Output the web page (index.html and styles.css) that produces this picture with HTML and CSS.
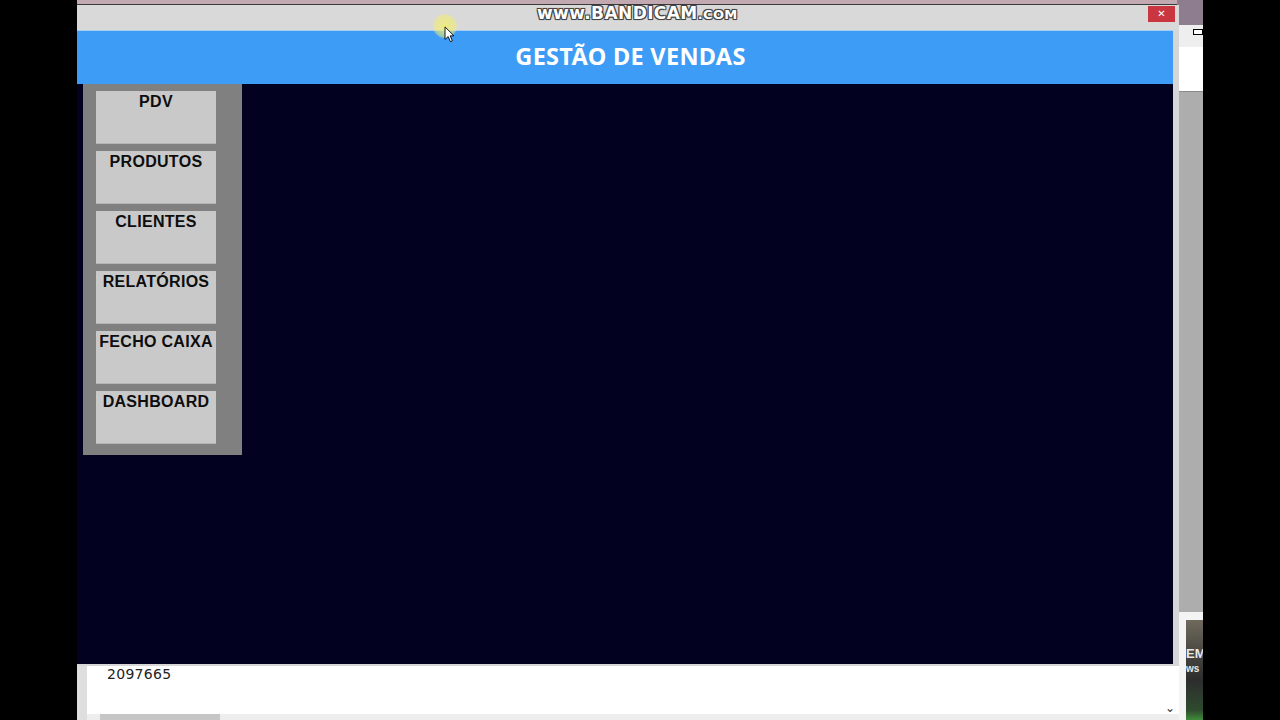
FILE: index.html
```html
<!doctype html>
<html>
    <head>
        <meta charset="UTF-8" />
        <title>Gestão de Vendas</title>
        <link rel="stylesheet" href="styles.css">
    </head>
    <body>
        <div class="letterbox"></div>

        <div class="screen">
            <!-- desktop strip behind everything -->
            <div class="desk-strip"></div>

            <!-- window behind, on the right -->
            <div class="back-window">
                <div class="back-title"></div>
                <div class="back-toolbar"><span class="back-icon"></span></div>
                <div class="back-body"></div>
                <div class="back-bottom">
                    <div class="thumb">
                        <span class="thumb-big">EM</span>
                        <span class="thumb-small">ws</span>
                    </div>
                </div>
            </div>

            <!-- console window behind, at the bottom -->
            <div class="console">
                <div class="console-text">2097665</div>
                <div class="console-arrow">&#x2304;</div>
                <div class="console-scroll"><div class="console-thumb"></div></div>
            </div>

            <!-- app window -->
            <div class="app">
                <div class="titlebar">
                    <div class="close-btn">&#x2715;</div>
                </div>
                <div class="app-inner">
                    <div class="header">
                        <h1>GESTÃO DE VENDAS</h1>
                    </div>
                    <div class="main">
                        <div class="sidebar">
                            <div class="menu-btn">PDV</div>
                            <div class="menu-btn">PRODUTOS</div>
                            <div class="menu-btn">CLIENTES</div>
                            <div class="menu-btn">RELATÓRIOS</div>
                            <div class="menu-btn">FECHO CAIXA</div>
                            <div class="menu-btn">DASHBOARD</div>
                        </div>
                    </div>
                </div>
            </div>

            <div class="watermark">www.BANDICAM<span class="wm-small">.com</span></div>

            <!-- mouse pointer -->
            <div class="cursor">
                <div class="cursor-glow"></div>
                <svg class="cursor-arrow" viewBox="0 0 12 19" xmlns="http://www.w3.org/2000/svg">
                    <path d="M1 1 L1 15 L4.5 11.8 L7 17.5 L9.2 16.6 L6.8 11 L11 11 Z" fill="white" stroke="black" stroke-width="1" stroke-linejoin="round" />
                </svg>
            </div>
        </div>

        <div class="letterbox"></div>
    </body>
</html>
```

FILE: styles.css
```css
html,
body {
    margin: 0;
    padding: 0;
}

body {
    display: flex;
    width: 1280px;
    height: 720px;
    overflow: hidden;
    background-color: #000000;
    font-family: "Noto Sans", "Open Sans", sans-serif;
}

.letterbox {
    width: 77px;
    flex-shrink: 0;
    background-color: #000000;
}

.screen {
    position: relative;
    width: 1126px;
    height: 720px;
    flex-shrink: 0;
    background-color: #adadad;
    overflow: hidden;
}

.desk-strip {
    position: absolute;
    top: 0;
    left: 0;
    right: 0;
    height: 4px;
    background-color: #c2a9b1;
    border-bottom: 1px solid #3a3a3a;
}

/* Background window on the right */
.back-window {
    position: absolute;
    top: 0;
    left: 1100px;
    width: 26px;
    height: 720px;
    display: flex;
    flex-direction: column;
}

.back-title {
    height: 25px;
    background-color: #8d7d8f;
}

.back-toolbar {
    height: 22px;
    background-color: #eeeeee;
    border-left: 2px solid #d6d6d6;
    padding: 4px 0 0 14px;
    box-sizing: border-box;
}

.back-icon {
    display: block;
    width: 8px;
    height: 4px;
    border: 1px solid #000000;
    background-color: #ffffff;
}

.back-body {
    flex: 1;
    background-color: #adadad;
    border-top: 44px solid #ffffff;
    border-left: 2px solid #d6d6d6;
    box-shadow: inset 0 1px 0 #8a8a8a;
}

.back-bottom {
    height: 108px;
    background-color: #f4f4f4;
    border-left: 2px solid #d6d6d6;
    padding: 8px 0 0 7px;
    box-sizing: border-box;
}

.thumb {
    height: 100px;
    background: linear-gradient(#6f6a5c 0%, #4c4a44 30%, #2d2d2d 60%, #2f4a2e 90%, #3f8c3a 100%);
    display: flex;
    flex-direction: column;
    padding-top: 27px;
    box-sizing: border-box;
    color: #e8e8e8;
    font-family: "Liberation Sans", sans-serif;
    font-weight: bold;
    line-height: 1;
}

.thumb-big {
    font-size: 13px;
}

.thumb-small {
    font-size: 10px;
    margin-top: 4px;
}

/* Console behind, at the bottom */
.console {
    position: absolute;
    left: 0;
    top: 664px;
    width: 1102px;
    height: 56px;
    background-color: #ffffff;
    border-left: 10px solid #dedede;
    box-sizing: border-box;
}

.console-text {
    margin: 2px 0 0 20px;
    font-family: "DejaVu Sans", sans-serif;
    font-size: 14px;
    line-height: 16px;
    color: #222222;
    letter-spacing: 0.3px;
}

.console-arrow {
    position: absolute;
    right: 4px;
    bottom: 4px;
    font-size: 12px;
    color: #333333;
}

.console-scroll {
    position: absolute;
    left: 0;
    right: 0;
    bottom: 0;
    height: 6px;
    background-color: #eeeeee;
}

.console-thumb {
    margin-left: 13px;
    width: 120px;
    height: 6px;
    background-color: #c6c6c6;
}

/* App window */
.app {
    position: absolute;
    top: 5px;
    left: 0;
    width: 1102px;
    height: 661px;
    display: flex;
    flex-direction: column;
    background-color: #d6d6d6;
}

.titlebar {
    height: 25px;
    flex-shrink: 0;
    background-color: #d9d9d9;
    display: flex;
    justify-content: flex-end;
    padding: 1px 4px 0 0;
    box-sizing: border-box;
}

.close-btn {
    width: 27px;
    height: 16px;
    background-color: #c9363f;
    color: #ffffff;
    font-family: "DejaVu Sans", sans-serif;
    font-size: 10px;
    line-height: 16px;
    text-align: center;
}

.app-inner {
    flex: 1;
    display: flex;
    flex-direction: column;
    margin: 0 6px 2px 0;
    background-color: #020220;
}

.header {
    height: 54px;
    flex-shrink: 0;
    background-color: #3d9cf5;
    display: flex;
    align-items: center;
    justify-content: center;
    padding: 0 0 4px 11px;
    border-top: 1px solid #a7cdf1;
    box-sizing: border-box;
}

.header h1 {
    margin: 0;
    color: #ffffff;
    font-family: "Noto Sans", sans-serif;
    font-size: 23.5px;
    font-weight: 700;
    letter-spacing: 0.3px;
}

.main {
    flex: 1;
    padding-left: 6px;
}

.sidebar {
    width: 159px;
    background-color: #808080;
    padding: 7px 0 12px 13px;
    box-sizing: border-box;
    display: flex;
    flex-direction: column;
    gap: 8px;
}

.menu-btn {
    width: 120px;
    height: 52px;
    background-color: #c9c9c9;
    box-shadow: 0 1px 0 #b5b5b5;
    color: #0d0d0d;
    font-family: "Liberation Sans", sans-serif;
    font-size: 16px;
    font-weight: bold;
    letter-spacing: 0.3px;
    text-align: center;
    white-space: nowrap;
    line-height: 20px;
    padding-top: 1px;
    box-sizing: border-box;
}

/* Overlays */
.watermark {
    position: absolute;
    top: 3px;
    left: 460px;
    color: #ffffff;
    font-family: "DejaVu Sans", sans-serif;
    font-size: 17px;
    font-weight: bold;
    letter-spacing: 0.4px;
    text-shadow: -1px -1px 0 #444, 1px -1px 0 #444, -1px 1px 0 #444, 1px 1px 0 #444, 0 0 2px #222;
}

.wm-small {
    font-size: 13px;
    text-transform: uppercase;
}

.cursor {
    position: absolute;
    left: 356px;
    top: 14px;
    width: 24px;
    height: 24px;
}

.cursor-glow {
    width: 24px;
    height: 24px;
    border-radius: 50%;
    background: radial-gradient(circle, rgba(240, 236, 120, 0.9) 0%, rgba(240, 236, 120, 0.6) 55%, rgba(240, 236, 120, 0) 100%);
}

.cursor-arrow {
    position: absolute;
    left: 11px;
    top: 12px;
    width: 11px;
    height: 17px;
}
```
